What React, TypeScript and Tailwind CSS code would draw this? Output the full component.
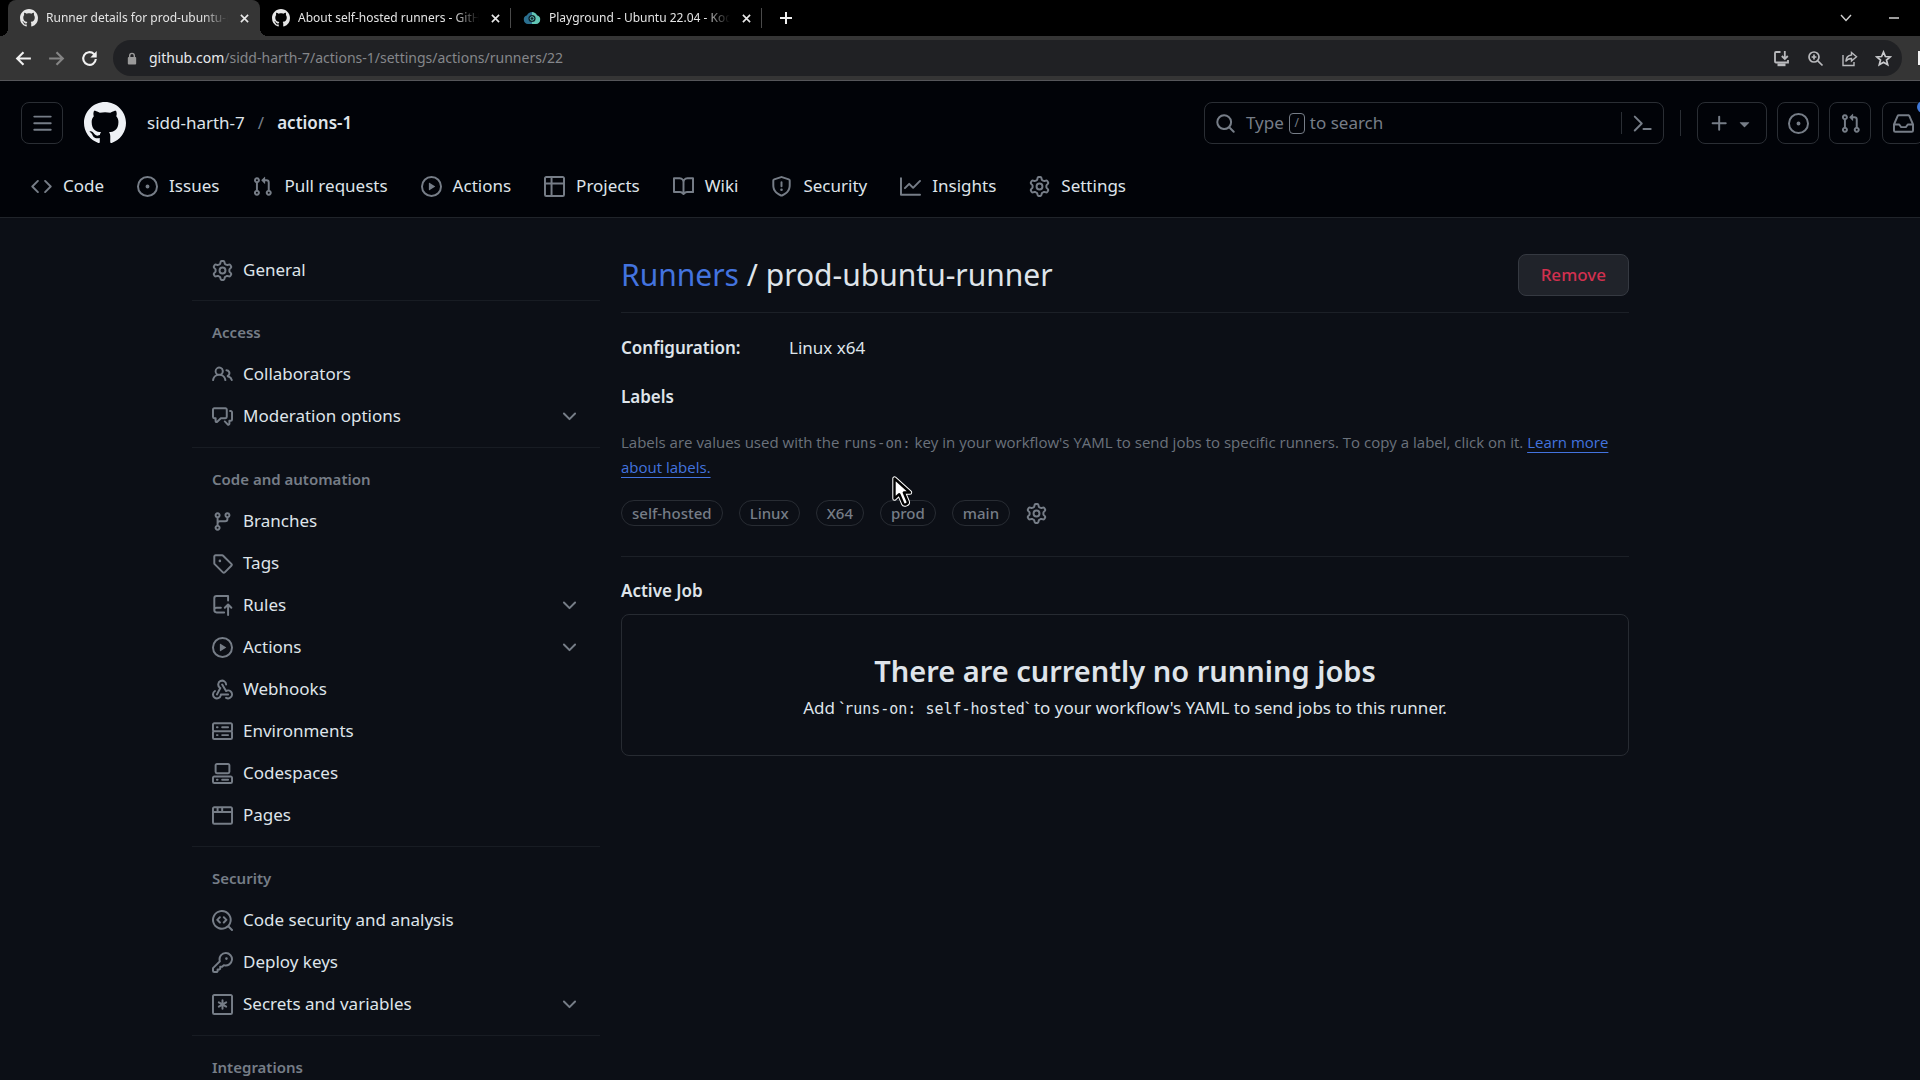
import React from "react";

const icons = {
  code: "m11.28 3.22 4.25 4.25a.75.75 0 0 1 0 1.06l-4.25 4.25a.749.749 0 0 1-1.275-.326.749.749 0 0 1 .215-.734L13.94 8l-3.72-3.72a.749.749 0 0 1 .326-1.275.749.749 0 0 1 .734.215Zm-6.56 0a.751.751 0 0 1 1.042.018.751.751 0 0 1 .018 1.042L2.06 8l3.72 3.72a.749.749 0 0 1-.326 1.275.749.749 0 0 1-.734-.215L.47 8.53a.75.75 0 0 1 0-1.06Z",
  issue: "M8 9.5a1.5 1.5 0 1 0 0-3 1.5 1.5 0 0 0 0 3ZM8 0a8 8 0 1 1 0 16A8 8 0 0 1 8 0ZM1.5 8a6.5 6.5 0 1 0 13 0 6.5 6.5 0 0 0-13 0Z",
  pull: "M1.5 3.25a2.25 2.25 0 1 1 3 2.122v5.256a2.251 2.251 0 1 1-1.5 0V5.372A2.25 2.25 0 0 1 1.5 3.25Zm5.677-.177L9.573.677A.25.25 0 0 1 10 .854V2.5h1A2.5 2.5 0 0 1 13.5 5v5.628a2.251 2.251 0 1 1-1.5 0V5a1 1 0 0 0-1-1h-1v1.646a.25.25 0 0 1-.427.177L7.177 3.427a.25.25 0 0 1 0-.354ZM3.75 2.5a.75.75 0 1 0 0 1.5.75.75 0 0 0 0-1.5Zm0 9.5a.75.75 0 1 0 0 1.5.75.75 0 0 0 0-1.5Zm8.25.75a.75.75 0 1 0 1.5 0 .75.75 0 0 0-1.5 0Z",
  play: "M8 0a8 8 0 1 1 0 16A8 8 0 0 1 8 0ZM1.5 8a6.5 6.5 0 1 0 13 0 6.5 6.5 0 0 0-13 0Zm4.879-2.773 4.264 2.559a.25.25 0 0 1 0 .428l-4.264 2.559A.25.25 0 0 1 6 10.559V5.442a.25.25 0 0 1 .379-.215Z",
  table: "M0 1.75C0 .784.784 0 1.75 0h12.5C15.216 0 16 .784 16 1.75v12.5A1.75 1.75 0 0 1 14.25 16H1.75A1.75 1.75 0 0 1 0 14.25ZM6.5 6.5v8h7.75a.25.25 0 0 0 .25-.25V6.5Zm8-1.5V1.75a.25.25 0 0 0-.25-.25H6.5V5Zm-13 1.5v7.75c0 .138.112.25.25.25H5v-8ZM5 5V1.5H1.75a.25.25 0 0 0-.25.25V5Z",
  book: "M0 1.75A.75.75 0 0 1 .75 1h4.253c1.227 0 2.317.59 3 1.501A3.743 3.743 0 0 1 11.006 1h4.245a.75.75 0 0 1 .75.75v10.5a.75.75 0 0 1-.75.75h-4.507a2.25 2.25 0 0 0-1.591.659l-.622.621a.75.75 0 0 1-1.06 0l-.622-.621A2.25 2.25 0 0 0 5.258 13H.75a.75.75 0 0 1-.75-.75Zm7.251 10.324.004-5.073-.002-2.253A2.25 2.25 0 0 0 5.003 2.5H1.5v9h3.757a3.75 3.75 0 0 1 1.994.574ZM8.755 4.75l-.004 7.322a3.752 3.752 0 0 1 1.992-.572H14.5v-9h-3.495a2.25 2.25 0 0 0-2.25 2.25Z",
  shield: "M7.467.133a1.748 1.748 0 0 1 1.066 0l5.25 1.68A1.75 1.75 0 0 1 15 3.48V7c0 1.566-.32 3.182-1.303 4.682-.983 1.498-2.585 2.813-5.032 3.855a1.697 1.697 0 0 1-1.33 0c-2.447-1.042-4.049-2.357-5.032-3.855C1.32 10.182 1 8.566 1 7V3.48a1.75 1.75 0 0 1 1.217-1.667Zm.61 1.429a.25.25 0 0 0-.153 0l-5.25 1.68a.25.25 0 0 0-.174.238V7c0 1.358.275 2.666 1.057 3.86.784 1.194 2.121 2.34 4.366 3.297a.196.196 0 0 0 .154 0c2.245-.956 3.582-2.104 4.366-3.298C13.225 9.666 13.5 8.36 13.5 7V3.48a.251.251 0 0 0-.174-.237l-5.25-1.68ZM8.75 4.75v3a.75.75 0 0 1-1.5 0v-3a.75.75 0 0 1 1.5 0ZM9 10.5a1 1 0 1 1-2 0 1 1 0 0 1 2 0Z",
  graph: "M1.5 1.75V13.5h13.75a.75.75 0 0 1 0 1.5H.75a.75.75 0 0 1-.75-.75V1.75a.75.75 0 0 1 1.5 0Zm14.28 2.53-5.25 5.25a.75.75 0 0 1-1.06 0L7 7.06 4.28 9.78a.751.751 0 0 1-1.042-.018.751.751 0 0 1-.018-1.042l3.25-3.25a.75.75 0 0 1 1.06 0L10 7.94l4.72-4.72a.751.751 0 0 1 1.042.018.751.751 0 0 1 .018 1.042Z",
  gear: "M8 0a8.2 8.2 0 0 1 .701.031C9.444.095 9.99.645 10.16 1.29l.288 1.107c.018.066.079.158.212.224.231.114.454.243.668.386.123.082.233.09.299.071l1.103-.303c.644-.176 1.392.021 1.82.63.27.385.506.792.704 1.218.315.675.111 1.422-.364 1.891l-.814.806c-.049.048-.098.147-.088.294.016.257.016.515 0 .772-.01.147.038.246.088.294l.814.806c.475.469.679 1.216.364 1.891a7.977 7.977 0 0 1-.704 1.217c-.428.61-1.176.807-1.82.63l-1.102-.302c-.067-.019-.177-.011-.3.071a5.909 5.909 0 0 1-.668.386c-.133.066-.194.158-.211.224l-.29 1.106c-.168.646-.715 1.196-1.458 1.26a8.006 8.006 0 0 1-1.402 0c-.743-.064-1.289-.614-1.458-1.26l-.289-1.106c-.018-.066-.079-.158-.212-.224a5.738 5.738 0 0 1-.668-.386c-.123-.082-.233-.09-.299-.071l-1.103.303c-.644.176-1.392-.021-1.82-.63a8.12 8.12 0 0 1-.704-1.218c-.315-.675-.111-1.422.363-1.891l.815-.806c.05-.048.098-.147.088-.294a6.214 6.214 0 0 1 0-.772c.01-.147-.038-.246-.088-.294l-.815-.806C.635 6.045.431 5.298.746 4.623a7.92 7.92 0 0 1 .704-1.217c.428-.61 1.176-.807 1.82-.63l1.102.302c.067.019.177.011.3-.071.214-.143.437-.272.668-.386.133-.066.194-.158.211-.224l.29-1.106C6.009.645 6.556.095 7.299.03 7.53.01 7.764 0 8 0Zm-.571 1.525c-.036.003-.108.036-.137.146l-.289 1.105c-.147.561-.549.967-.998 1.189-.173.086-.34.183-.5.29-.417.278-.97.423-1.529.27l-1.103-.303c-.109-.03-.175.016-.195.045-.22.312-.412.644-.573.99-.014.031-.021.11.059.19l.815.806c.411.406.562.957.53 1.456a4.709 4.709 0 0 0 0 .582c.032.499-.119 1.05-.53 1.456l-.815.806c-.081.08-.073.159-.059.19.162.346.353.677.573.989.02.03.085.076.195.046l1.102-.303c.56-.153 1.113-.008 1.53.27.161.107.328.204.501.29.447.222.85.629.997 1.189l.289 1.105c.029.109.101.143.137.146a6.6 6.6 0 0 0 1.142 0c.036-.003.108-.036.137-.146l.289-1.105c.147-.561.549-.967.998-1.189.173-.086.34-.183.5-.29.417-.278.97-.423 1.529-.27l1.103.303c.109.029.175-.016.195-.045.22-.313.411-.644.573-.99.014-.031.021-.11-.059-.19l-.815-.806c-.411-.406-.562-.957-.53-1.456a4.709 4.709 0 0 0 0-.582c-.032-.499.119-1.05.53-1.456l.815-.806c.081-.08.073-.159.059-.19a6.464 6.464 0 0 0-.573-.989c-.02-.03-.085-.076-.195-.046l-1.102.303c-.56.153-1.113.008-1.53-.27a4.44 4.44 0 0 0-.501-.29c-.447-.222-.85-.629-.997-1.189l-.289-1.105c-.029-.11-.101-.143-.137-.146a6.6 6.6 0 0 0-1.142 0ZM11 8a3 3 0 1 1-6 0 3 3 0 0 1 6 0ZM9.5 8a1.5 1.5 0 1 0-3.001.001A1.5 1.5 0 0 0 9.5 8Z",
  people: "M2 5.5a3.5 3.5 0 1 1 5.898 2.549 5.508 5.508 0 0 1 3.034 4.084.75.75 0 1 1-1.482.235 4 4 0 0 0-7.9 0 .75.75 0 0 1-1.482-.236A5.507 5.507 0 0 1 3.102 8.05 3.493 3.493 0 0 1 2 5.5ZM11 4a3.001 3.001 0 0 1 2.22 5.018 5.01 5.01 0 0 1 2.56 3.012.749.749 0 0 1-.885.954.752.752 0 0 1-.549-.514 3.507 3.507 0 0 0-2.522-2.372.75.75 0 0 1-.574-.73v-.352a.75.75 0 0 1 .416-.672A1.5 1.5 0 0 0 11 5.5.75.75 0 0 1 11 4Zm-5.5-.5a2 2 0 1 0-.001 3.999A2 2 0 0 0 5.5 3.5Z",
  discussion: "M1.75 1h8.5c.966 0 1.75.784 1.75 1.75v5.5A1.75 1.75 0 0 1 10.25 10H7.061l-2.574 2.573A1.458 1.458 0 0 1 2 11.543V10h-.25A1.75 1.75 0 0 1 0 8.25v-5.5C0 1.784.784 1 1.75 1ZM1.5 2.75v5.5c0 .138.112.25.25.25h1a.75.75 0 0 1 .75.75v2.19l2.72-2.72a.749.749 0 0 1 .53-.22h3.5a.25.25 0 0 0 .25-.25v-5.5a.25.25 0 0 0-.25-.25h-8.5a.25.25 0 0 0-.25.25Zm13 2a.25.25 0 0 0-.25-.25h-.5a.75.75 0 0 1 0-1.5h.5c.966 0 1.75.784 1.75 1.75v5.5A1.75 1.75 0 0 1 14.25 12H14v1.543a1.458 1.458 0 0 1-2.487 1.03L9.22 12.28a.749.749 0 0 1 .326-1.275.749.749 0 0 1 .734.215l2.22 2.22v-2.19a.75.75 0 0 1 .75-.75h1a.25.25 0 0 0 .25-.25Z",
  branch: "M9.5 3.25a2.25 2.25 0 1 1 3 2.122V6A2.5 2.5 0 0 1 10 8.5H6a1 1 0 0 0-1 1v1.128a2.251 2.251 0 1 1-1.5 0V5.372a2.25 2.25 0 1 1 1.5 0v1.836A2.493 2.493 0 0 1 6 7h4a1 1 0 0 0 1-1v-.628A2.25 2.25 0 0 1 9.5 3.25Zm-6 0a.75.75 0 1 0 1.5 0 .75.75 0 0 0-1.5 0Zm8.25-.75a.75.75 0 1 0 0 1.5.75.75 0 0 0 0-1.5ZM4.25 12a.75.75 0 1 0 0 1.5.75.75 0 0 0 0-1.5Z",
  tag: "M1 7.775V2.75C1 1.784 1.784 1 2.75 1h5.025c.464 0 .91.184 1.238.513l6.25 6.25a1.75 1.75 0 0 1 0 2.474l-5.026 5.026a1.75 1.75 0 0 1-2.474 0l-6.25-6.25A1.752 1.752 0 0 1 1 7.775Zm1.5 0c0 .066.026.13.073.177l6.25 6.25a.25.25 0 0 0 .354 0l5.025-5.025a.25.25 0 0 0 0-.354l-6.25-6.25a.25.25 0 0 0-.177-.073H2.75a.25.25 0 0 0-.25.25ZM6 5a1 1 0 1 1 0 2 1 1 0 0 1 0-2Z",
  repoPush: "M1 2.5A2.5 2.5 0 0 1 3.5 0h8.75a.75.75 0 0 1 .75.75v3.5a.75.75 0 0 1-1.5 0V1.5h-8a1 1 0 0 0-1 1v6.708A2.493 2.493 0 0 1 3.5 9h3.25a.75.75 0 0 1 0 1.5H3.5a1 1 0 0 0 0 2h5.75a.75.75 0 0 1 0 1.5H3.5A2.5 2.5 0 0 1 1 11.5Zm13.23 7.79h-.001l-1.224-1.224v6.184a.75.75 0 0 1-1.5 0V9.066L10.28 10.29a.75.75 0 0 1-1.06-1.061l2.505-2.504a.75.75 0 0 1 1.06 0L15.29 9.23a.751.751 0 0 1-.018 1.042.751.751 0 0 1-1.042.018Z",
  webhook: "M5.5 4.25a2.25 2.25 0 0 1 4.5 0 .75.75 0 0 0 1.5 0 3.75 3.75 0 1 0-6.14 2.889l-2.272 4.258a.75.75 0 0 0 1.324.706L7 7.25a.75.75 0 0 0-.309-1.015A2.25 2.25 0 0 1 5.5 4.25Z",
  webhookRight: "M7.364 3.607a.75.75 0 0 1 1.03.257l2.608 4.349a3.75 3.75 0 1 1-.628 6.785.75.75 0 0 1 .752-1.299 2.25 2.25 0 1 0-.033-3.88.75.75 0 0 1-1.03-.256L7.107 4.636a.75.75 0 0 1 .257-1.03Z",
  webhookLeft: "M2.9 8.776A.75.75 0 0 1 2.625 9.8 2.25 2.25 0 1 0 6 11.75a.75.75 0 0 1 .75-.751h5.5a.75.75 0 0 1 0 1.5H7.425a3.751 3.751 0 1 1-5.55-3.998.75.75 0 0 1 1.024.274Z",
  server: "M1.75 1h12.5c.966 0 1.75.784 1.75 1.75v4c0 .372-.116.717-.314 1 .198.283.314.628.314 1v4a1.75 1.75 0 0 1-1.75 1.75H1.75A1.75 1.75 0 0 1 0 12.75v-4c0-.358.109-.707.314-1a1.739 1.739 0 0 1-.314-1v-4C0 1.784.784 1 1.75 1ZM1.5 2.75v4c0 .138.112.25.25.25h12.5a.25.25 0 0 0 .25-.25v-4a.25.25 0 0 0-.25-.25H1.75a.25.25 0 0 0-.25.25Zm.25 5.75a.25.25 0 0 0-.25.25v4c0 .138.112.25.25.25h12.5a.25.25 0 0 0 .25-.25v-4a.25.25 0 0 0-.25-.25ZM7 4.75A.75.75 0 0 1 7.75 4h4.5a.75.75 0 0 1 0 1.5h-4.5A.75.75 0 0 1 7 4.75ZM7.75 10h4.5a.75.75 0 0 1 0 1.5h-4.5a.75.75 0 0 1 0-1.5ZM3 4.75A.75.75 0 0 1 3.75 4h.5a.75.75 0 0 1 0 1.5h-.5A.75.75 0 0 1 3 4.75ZM3.75 10h.5a.75.75 0 0 1 0 1.5h-.5a.75.75 0 0 1 0-1.5Z",
  codespaces: "M0 11.25c0-.966.784-1.75 1.75-1.75h12.5c.966 0 1.75.784 1.75 1.75v3A1.75 1.75 0 0 1 14.25 16H1.75A1.75 1.75 0 0 1 0 14.25Zm2-9.5C2 .784 2.784 0 3.75 0h8.5C13.216 0 14 .784 14 1.75v5a1.75 1.75 0 0 1-1.75 1.75h-8.5A1.75 1.75 0 0 1 2 6.75Zm1.75-.25a.25.25 0 0 0-.25.25v5c0 .138.112.25.25.25h8.5a.25.25 0 0 0 .25-.25v-5a.25.25 0 0 0-.25-.25Zm-2 9.5a.25.25 0 0 0-.25.25v3c0 .138.112.25.25.25h12.5a.25.25 0 0 0 .25-.25v-3a.25.25 0 0 0-.25-.25ZM7 12.75a.75.75 0 0 1 .75-.75h4.5a.75.75 0 0 1 0 1.5h-4.5a.75.75 0 0 1-.75-.75Zm-4 0a.75.75 0 0 1 .75-.75h.5a.75.75 0 0 1 0 1.5h-.5a.75.75 0 0 1-.75-.75Z",
  browser: "M0 2.75C0 1.784.784 1 1.75 1h12.5c.966 0 1.75.784 1.75 1.75v10.5A1.75 1.75 0 0 1 14.25 15H1.75A1.75 1.75 0 0 1 0 13.25ZM14.5 6h-13v7.25c0 .138.112.25.25.25h12.5a.25.25 0 0 0 .25-.25Zm-6-3.5v2h6V2.75a.25.25 0 0 0-.25-.25ZM5 2.5v2h2v-2Zm-3.25 0a.25.25 0 0 0-.25.25V4.5h2v-2Z",
  codescan: "M8.47 4.97a.75.75 0 0 0 0 1.06L9.94 7.5 8.47 8.97a.75.75 0 1 0 1.06 1.06l2-2a.75.75 0 0 0 0-1.06l-2-2a.75.75 0 0 0-1.06 0ZM6.53 6.03a.75.75 0 0 0-1.06-1.06l-2 2a.75.75 0 0 0 0 1.06l2 2a.75.75 0 1 0 1.06-1.06L5.06 7.5l1.47-1.47ZM12.246 13.307a7.501 7.501 0 1 1 1.06-1.06l2.474 2.473a.749.749 0 0 1-.326 1.275.749.749 0 0 1-.734-.215ZM1.5 7.5a6.002 6.002 0 0 0 3.608 5.504 6.002 6.002 0 0 0 6.486-1.117.748.748 0 0 1 .292-.293A6 6 0 1 0 1.5 7.5Z",
  key: "M10.5 0a5.499 5.499 0 1 1-1.288 10.848l-.932.932a.749.749 0 0 1-.53.22H7v.75a.749.749 0 0 1-.22.53l-.5.5a.749.749 0 0 1-.53.22H5v.75a.749.749 0 0 1-.22.53l-.5.5a.749.749 0 0 1-.53.22h-2A1.75 1.75 0 0 1 0 14.25v-2c0-.199.079-.389.22-.53l4.932-4.932A5.5 5.5 0 0 1 10.5 0Zm-4 5.5c-.001.431.069.86.205 1.269a.75.75 0 0 1-.181.768L1.5 12.56v1.69c0 .138.112.25.25.25h1.69l.06-.06v-1.19a.75.75 0 0 1 .75-.75h1.19l.06-.06v-1.19a.75.75 0 0 1 .75-.75h1.19l1.023-1.025a.75.75 0 0 1 .768-.18A4 4 0 1 0 6.5 5.5ZM11 6a1 1 0 1 1 0-2 1 1 0 0 1 0 2Z",
  bars: "M1 2.75A.75.75 0 0 1 1.75 2h12.5a.75.75 0 0 1 0 1.5H1.75A.75.75 0 0 1 1 2.75Zm0 5A.75.75 0 0 1 1.75 7h12.5a.75.75 0 0 1 0 1.5H1.75A.75.75 0 0 1 1 7.75ZM1.75 12h12.5a.75.75 0 0 1 0 1.5H1.75a.75.75 0 0 1 0-1.5Z",
  github: "M8 0c4.42 0 8 3.58 8 8a8.013 8.013 0 0 1-5.45 7.59c-.4.08-.55-.17-.55-.38 0-.27.01-1.13.01-2.2 0-.75-.25-1.23-.54-1.48 1.78-.2 3.65-.88 3.65-3.95 0-.88-.31-1.59-.82-2.15.08-.2.36-1.02-.08-2.12 0 0-.67-.22-2.2.82-.64-.18-1.32-.27-2-.27-.68 0-1.36.09-2 .27-1.53-1.03-2.2-.82-2.2-.82-.44 1.1-.16 1.92-.08 2.12-.51.56-.82 1.28-.82 2.15 0 3.06 1.86 3.75 3.64 3.95-.23.2-.44.55-.51 1.07-.46.21-1.61.55-2.33-.66-.15-.24-.6-.83-1.23-.82-.67.01-.27.38.01.53.34.19.73.9.82 1.13.16.45.68 1.31 2.69.94 0 .67.01 1.3.01 1.49 0 .21-.15.45-.55.38A7.995 7.995 0 0 1 0 8c0-4.42 3.58-8 8-8Z",
  search: "M10.68 11.74a6 6 0 0 1-7.922-8.982 6 6 0 0 1 8.982 7.922l3.04 3.04a.749.749 0 0 1-.326 1.275.749.749 0 0 1-.734-.215ZM11.5 7a4.499 4.499 0 1 0-8.997 0A4.499 4.499 0 0 0 11.5 7Z",
  plus: "M7.75 2a.75.75 0 0 1 .75.75V7h4.25a.75.75 0 0 1 0 1.5H8.5v4.25a.75.75 0 0 1-1.5 0V8.5H2.75a.75.75 0 0 1 0-1.5H7V2.75A.75.75 0 0 1 7.75 2Z",
  triangle: "m4.427 7.427 3.396 3.396a.25.25 0 0 0 .354 0l3.396-3.396A.25.25 0 0 0 11.396 7H4.604a.25.25 0 0 0-.177.427Z",
  inbox: "M2.8 2.06A1.75 1.75 0 0 1 4.41 1h7.18c.7 0 1.333.417 1.61 1.06l2.74 6.395c.04.093.06.194.06.295v4.5A1.75 1.75 0 0 1 14.25 15H1.75A1.75 1.75 0 0 1 0 13.25v-4.5c0-.101.02-.202.06-.295Zm1.61.44a.25.25 0 0 0-.23.152L1.887 8H4.75a.75.75 0 0 1 .6.3L6.625 10h2.75l1.275-1.7a.75.75 0 0 1 .6-.3h2.863L11.82 2.652a.25.25 0 0 0-.23-.152Zm10.09 7h-2.875l-1.275 1.7a.75.75 0 0 1-.6.3h-3.5a.75.75 0 0 1-.6-.3L4.375 9.5H1.5v3.75c0 .138.112.25.25.25h12.5a.25.25 0 0 0 .25-.25Z",
  palette: "m6.354 8.04-4.773 4.773a.75.75 0 1 0 1.061 1.06L7.945 8.57a.75.75 0 0 0 0-1.06L2.642 2.206a.75.75 0 0 0-1.06 1.061L6.353 8.04ZM8.75 11.5a.75.75 0 0 0 0 1.5h5.5a.75.75 0 0 0 0-1.5h-5.5Z",
  chevron: "M12.78 5.22a.749.749 0 0 1 0 1.06l-4.25 4.25a.749.749 0 0 1-1.06 0L3.22 6.28a.749.749 0 1 1 1.06-1.06L8 8.939l3.72-3.719a.749.749 0 0 1 1.06 0Z",
  asterisk: "M1.75 0h12.5C15.216 0 16 .784 16 1.75v12.5A1.75 1.75 0 0 1 14.25 16H1.75A1.75 1.75 0 0 1 0 14.25V1.75C0 .784.784 0 1.75 0ZM1.5 1.75v12.5c0 .138.112.25.25.25h12.5a.25.25 0 0 0 .25-.25V1.75a.25.25 0 0 0-.25-.25H1.75a.25.25 0 0 0-.25.25ZM8 4a.75.75 0 0 1 .75.75V6.7l1.69-.975a.75.75 0 0 1 .75 1.3L9.5 8l1.69.976a.75.75 0 0 1-.75 1.298L8.75 9.3v1.951a.75.75 0 0 1-1.5 0V9.299l-1.69.976a.75.75 0 0 1-.75-1.3L6.5 8l-1.69-.975a.75.75 0 0 1 .75-1.3l1.69.976V4.75A.75.75 0 0 1 8 4Z",
};

type IconName = keyof typeof icons;

function Icon({ name, className = "size-[21px] text-[#767d87]" }: { name: IconName; className?: string }) {
  return (
    <svg viewBox="0 0 16 16" fill="currentColor" aria-hidden="true" className={`shrink-0 ${className}`}>
      <path d={icons[name]} />
      {name === "webhook" && (
        <>
          <path d={icons.webhookRight} />
          <path d={icons.webhookLeft} />
        </>
      )}
    </svg>
  );
}

function CloudFavicon() {
  return (
    <svg viewBox="0 0 18 14" className="h-3.5 w-[18px] shrink-0" aria-hidden="true">
      <path d="M5 13a4.5 4.5 0 0 1-1-8.8A6 6 0 0 1 9 1v12Z" fill="#2b6f8f" />
      <path d="M9 1a6 6 0 0 1 5 3.2A4.5 4.5 0 0 1 13 13H9Z" fill="#62c6b5" />
      <circle cx="9" cy="7.5" r="3.6" fill="#10242c" />
      <circle cx="9" cy="7.5" r="1.8" fill="none" stroke="#58b8ae" strokeWidth="1" />
    </svg>
  );
}

function CloseIcon() {
  return (
    <svg viewBox="0 0 10 10" className="size-[9px]" aria-hidden="true">
      <path d="M1 1l8 8M9 1l-8 8" stroke="#e8e8e8" strokeWidth="1.8" />
    </svg>
  );
}

function Tab({ title, icon, active = false }: { title: string; icon: React.ReactNode; active?: boolean }) {
  return (
    <div
      className={
        active
          ? "relative flex w-[252px] items-center rounded-t-lg bg-[#353535] pr-2 pl-3 before:absolute before:bottom-0 before:-left-2 before:size-2 before:bg-[radial-gradient(circle_at_0_0,transparent_8px,#353535_8px)] after:absolute after:-right-2 after:bottom-0 after:size-2 after:bg-[radial-gradient(circle_at_100%_0,transparent_8px,#353535_8px)]"
          : "relative flex w-[251px] items-center pr-2 pl-3 after:absolute after:right-0 after:h-5 after:w-px after:bg-[#4a4a4a]"
      }
    >
      {icon}
      <a
        href="#"
        className="mr-2 ml-2 min-w-0 flex-1 overflow-hidden text-xs whitespace-nowrap text-[#e4e4e4] [mask-image:linear-gradient(to_right,black_86%,transparent)]"
      >
        {title}
      </a>
      <button aria-label="Close tab" className="flex size-4 items-center justify-center">
        <CloseIcon />
      </button>
    </div>
  );
}

function BrowserChrome() {
  return (
    <div className="shrink-0">
      <div className="flex h-9 bg-black pl-2">
        <Tab active title="Runner details for prod-ubuntu-runner" icon={<Icon name="github" className="size-[18px] text-[#e6e6e6]" />} />
        <Tab title="About self-hosted runners - GitHub Docs" icon={<Icon name="github" className="size-[18px] text-[#e6e6e6]" />} />
        <Tab title="Playground - Ubuntu 22.04 - KodeKloud" icon={<CloudFavicon />} />
        <button aria-label="New tab" className="flex w-12 items-center justify-center">
          <svg viewBox="0 0 14 14" className="size-3.5" aria-hidden="true">
            <path d="M7 1v12M1 7h12" stroke="#f0f0f0" strokeWidth="2" />
          </svg>
        </button>
        <div className="ml-auto flex items-center gap-9 pr-5">
          <button aria-label="Search tabs">
            <svg viewBox="0 0 12 8" className="h-2 w-3" fill="none" aria-hidden="true">
              <path d="M1 1l5 5.5 5-5.5" stroke="#d0d0d0" strokeWidth="1.4" />
            </svg>
          </button>
          <button aria-label="Minimize">
            <svg viewBox="0 0 12 8" className="h-2 w-3" aria-hidden="true">
              <path d="M1 4h10" stroke="#e0e0e0" strokeWidth="1.4" />
            </svg>
          </button>
        </div>
      </div>
      <div className="flex h-[45px] items-center border-b border-[#55565a] bg-[#353535] pl-3.5">
        <button aria-label="Back">
          <svg viewBox="0 0 18 18" className="size-[19px]" fill="none" stroke="#f1f1f1" strokeWidth="2" aria-hidden="true">
            <path d="M16 9H3M9 3L3 9l6 6" />
          </svg>
        </button>
        <button aria-label="Forward" className="ml-3.5">
          <svg viewBox="0 0 18 18" className="size-[19px]" fill="none" stroke="#858585" strokeWidth="2" aria-hidden="true">
            <path d="M2 9h13M9 3l6 6-6 6" />
          </svg>
        </button>
        <button aria-label="Reload" className="ml-3.5">
          <svg viewBox="0 0 18 18" className="size-[19px]" fill="none" aria-hidden="true">
            <path d="M15 9.5a6 6 0 1 1-1.8-4.8L15 6.5" stroke="#f1f1f1" strokeWidth="2" />
            <path d="M15.8 2v6H9.8Z" fill="#f1f1f1" />
          </svg>
        </button>
        <div className="ml-3.5 flex h-9 flex-1 items-center rounded-full bg-[#202124] pr-2.5">
          <svg viewBox="0 0 10 14" className="ml-3.5 h-[13px] w-2.5" aria-hidden="true">
            <path d="M2.5 6V4a2.5 2.5 0 0 1 5 0v2" fill="none" stroke="#9a9a9a" strokeWidth="1.5" />
            <rect x="0.5" y="5.5" width="9" height="8" rx="1" fill="#9a9a9a" />
          </svg>
          <p className="ml-3 flex-1 text-sm text-[#85878b]">
            <span className="text-[#e8eaed]">github.com</span>/sidd-harth-7/actions-1/settings/actions/runners/22
          </p>
          <div className="flex items-center gap-[17px]">
            <button aria-label="Install app">
              <svg viewBox="0 0 17 17" className="size-[17px]" fill="none" stroke="#b9babd" strokeWidth="1.8" aria-hidden="true">
                <path d="M7.5 2H3a1 1 0 0 0-1 1v8.5a1 1 0 0 0 1 1h12V10M11.8 1v7.5M8.8 6l3 3 3-3" />
                <path d="M4.5 14.8h8" strokeWidth="2.8" />
              </svg>
            </button>
            <button aria-label="Zoom">
              <svg viewBox="0 0 17 17" className="size-[17px]" fill="none" stroke="#b9babd" strokeWidth="1.7" aria-hidden="true">
                <circle cx="7" cy="7" r="5" />
                <path d="M10.8 10.8L15.5 15.5M7 4.6v4.8M4.6 7h4.8" />
              </svg>
            </button>
            <button aria-label="Share">
              <svg viewBox="0 0 17 17" className="size-[17px]" fill="none" stroke="#b9babd" strokeWidth="1.4" aria-hidden="true">
                <path d="M2 5v10.5h11V12" />
                <path d="M10.5 2.5l5 4.3-5 4.2V8.5C7.5 8.5 6 9.5 4.8 11.5 5 8 7 5.3 10.5 5Z" />
              </svg>
            </button>
            <button aria-label="Bookmark">
              <svg viewBox="0 0 17 17" className="size-[17px]" fill="none" stroke="#c9cacd" strokeWidth="1.7" aria-hidden="true">
                <path d="M8.5 2l1.9 4.5 4.8.4-3.7 3.1 1.2 4.8-4.2-2.6-4.2 2.6 1.2-4.8L1.8 6.9l4.8-.4Z" />
              </svg>
            </button>
          </div>
        </div>
        <div className="ml-4 h-3.5 w-0.5 bg-[#f2f2f2]" />
      </div>
    </div>
  );
}

const navItems: [IconName, string][] = [
  ["code", "Code"],
  ["issue", "Issues"],
  ["pull", "Pull requests"],
  ["play", "Actions"],
  ["table", "Projects"],
  ["book", "Wiki"],
  ["shield", "Security"],
  ["graph", "Insights"],
  ["gear", "Settings"],
];

const squareButton =
  "relative flex h-[42px] shrink-0 items-center justify-center rounded-lg border border-[#2a2e34]";

function SiteHeader() {
  return (
    <header className="shrink-0 overflow-hidden border-b border-[#20242a] bg-[#010308]">
      <div className="flex items-center pt-[21px] pl-[21px]">
        <button aria-label="Open menu" className={`${squareButton} w-[42px]`}>
          <Icon name="bars" />
        </button>
        <a href="#" aria-label="Homepage" className="ml-[21px]">
          <Icon name="github" className="size-[42px] text-[#eef1f5]" />
        </a>
        <div className="ml-[21px] flex gap-[13px]">
          <a href="#">sidd-harth-7</a>
          <span className="text-[#767d87]">/</span>
          <a href="#" className="font-semibold">actions-1</a>
        </div>
        <div className="-mr-1 ml-auto flex items-center">
          <div className="flex h-[42px] w-[460px] items-center rounded-lg border border-[#2a2e34] pl-2.5 text-[#767d87]">
            <Icon name="search" />
            <label htmlFor="site-search" className="ml-2.5 flex items-center gap-[5px] whitespace-nowrap">
              Type
              <kbd className="flex h-[21px] w-4 items-center justify-center rounded border border-[#767d87] font-['Noto_Sans',sans-serif] text-xs">
                /
              </kbd>
              to search
            </label>
            <input id="site-search" type="text" className="min-w-0 flex-1 bg-transparent outline-none" />
            <button aria-label="Command palette" className="flex h-[22px] items-center border-l border-[#2a2e34] px-2.5">
              <Icon name="palette" />
            </button>
          </div>
          <div className="mx-4 h-[26px] w-px bg-[#2a2e34]" />
          <button aria-label="Create new" className={`${squareButton} w-[70px] gap-1`}>
            <Icon name="plus" />
            <Icon name="triangle" />
          </button>
          <button aria-label="Issues" className={`${squareButton} ml-2.5 w-[42px]`}>
            <Icon name="issue" />
          </button>
          <button aria-label="Pull requests" className={`${squareButton} ml-2.5 w-[42px]`}>
            <Icon name="pull" />
          </button>
          <button aria-label="Notifications" className={`${squareButton} ml-[11px] w-[42px]`}>
            <Icon name="inbox" />
            <span className="absolute -top-0.5 -right-1.5 size-3 rounded-full bg-[#3f78d8]" />
          </button>
        </div>
      </div>
      <nav aria-label="Repository" className="flex h-[73px] gap-[33px] pt-[11px] pl-[31px]">
        {navItems.map(([icon, label]) => (
          <a key={label} href="#" className="flex h-[62px] items-center gap-[11px]">
            <Icon name={icon} />
            {label}
          </a>
        ))}
      </nav>
    </header>
  );
}

type Entry = { icon: IconName; label: string; expandable?: boolean };

const sections: { heading?: string; entries: Entry[] }[] = [
  { entries: [{ icon: "gear", label: "General" }] },
  {
    heading: "Access",
    entries: [
      { icon: "people", label: "Collaborators" },
      { icon: "discussion", label: "Moderation options", expandable: true },
    ],
  },
  {
    heading: "Code and automation",
    entries: [
      { icon: "branch", label: "Branches" },
      { icon: "tag", label: "Tags" },
      { icon: "repoPush", label: "Rules", expandable: true },
      { icon: "play", label: "Actions", expandable: true },
      { icon: "webhook", label: "Webhooks" },
      { icon: "server", label: "Environments" },
      { icon: "codespaces", label: "Codespaces" },
      { icon: "browser", label: "Pages" },
    ],
  },
  {
    heading: "Security",
    entries: [
      { icon: "codescan", label: "Code security and analysis" },
      { icon: "key", label: "Deploy keys" },
      { icon: "asterisk", label: "Secrets and variables", expandable: true },
    ],
  },
  { heading: "Integrations", entries: [] },
];

function SidebarEntry({ icon, label, expandable }: Entry) {
  const row = "flex h-[42px] w-full items-center gap-2.5 px-5 text-left";
  if (expandable) {
    return (
      <button className={row} aria-expanded="false">
        <Icon name={icon} />
        <span className="flex-1">{label}</span>
        <Icon name="chevron" />
      </button>
    );
  }
  return (
    <a href="#" className={row}>
      <Icon name={icon} />
      {label}
    </a>
  );
}

function Sidebar() {
  return (
    <nav aria-label="Settings" className="pt-[31px]">
      {sections.map(({ heading, entries }, i) => (
        <section key={heading ?? i} className={i > 0 ? "border-t border-[#181c23] py-2.5" : "pb-[9px]"}>
          {heading && (
            <h2 className="flex h-[42px] items-center px-5 text-[15px] font-semibold text-[#767d87]">{heading}</h2>
          )}
          {entries.map((entry) => (
            <SidebarEntry key={entry.label} {...entry} />
          ))}
        </section>
      ))}
    </nav>
  );
}

const labels = ["self-hosted", "Linux", "X64", "prod", "main"];

function RunnerDetails() {
  return (
    <main className="pt-9">
      <div className="flex items-center justify-between border-b border-[#1c2027] pb-4">
        <h1 className="text-3xl">
          <a href="#" className="text-[#4373df]">Runners</a> / prod-ubuntu-runner
        </h1>
        <button className="h-[42px] rounded-lg border border-[#353941] bg-[#20232a] px-[22px] font-medium text-[#d2304f]">
          Remove
        </button>
      </div>
      <dl className="mt-[23px] flex">
        <dt className="w-[168px] font-semibold">Configuration:</dt>
        <dd>Linux x64</dd>
      </dl>
      <h2 className="mt-[25px] font-semibold">Labels</h2>
      <p className="mt-[21px] font-['Open_Sans',sans-serif] text-[15px] leading-[25px] text-[#6b727c]">
        Labels are values used with the <code className="font-['DejaVu_Sans_Mono',monospace] text-sm">runs-on:</code> key
        in your workflow's YAML to send jobs to specific runners. To copy a label, click on it.{" "}
        <a href="#" className="text-[#4373df] underline underline-offset-4">
          Learn more about labels.
        </a>
      </p>
      <div className="mt-5 flex h-[26px] items-center gap-4">
        {labels.map((label) => (
          <button
            key={label}
            className="h-[26px] rounded-full border border-[#282c33] px-2.5 text-[15px] leading-6 font-medium text-[#767d87]"
          >
            {label}
          </button>
        ))}
        <button aria-label="Edit labels">
          <Icon name="gear" />
        </button>
      </div>
      <hr className="mt-[30px] border-[#1c2027]" />
      <h2 className="mt-[22px] font-semibold">Active Job</h2>
      <section className="mt-[11px] rounded-lg border border-[#272b32] pt-[38px] pb-[34px] text-center">
        <h3 className="text-[29px] leading-9 font-semibold">There are currently no running jobs</h3>
        <p className="mt-[7px]">
          Add `<code className="font-['DejaVu_Sans_Mono',monospace] text-[15px]">runs-on: self-hosted</code>` to your
          workflow's YAML to send jobs to this runner.
        </p>
      </section>
    </main>
  );
}

function Pointer() {
  return (
    <svg viewBox="0 0 21 33" className="pointer-events-none absolute top-[475px] left-[892px] h-[33px] w-[21px]" aria-hidden="true">
      <g fill="#fff" strokeLinejoin="round">
        <path
          d="M2.5 3.5v20l4.8-4.3 3.9 9.3c1 2.2 5.3.5 4.5-1.8l-3.9-9.2h6.2Z"
          stroke="#fff"
          strokeWidth="4.4"
        />
        <path
          d="M2.5 3.5v20l4.8-4.3 3.9 9.3c1 2.2 5.3.5 4.5-1.8l-3.9-9.2h6.2Z"
          stroke="#000"
          strokeWidth="2.4"
        />
      </g>
    </svg>
  );
}

export default function App() {
  return (
    <div className="relative flex h-screen flex-col overflow-hidden bg-[#0c0f16] font-['Noto_Sans',sans-serif] text-[17px] leading-6 text-[#dfe4ea]">
      <BrowserChrome />
      <SiteHeader />
      <div className="grid min-h-0 flex-1 grid-cols-[408px_minmax(0,1fr)] gap-[21px] overflow-hidden pr-[291px] pl-48">
        <Sidebar />
        <RunnerDetails />
      </div>
      <Pointer />
    </div>
  );
}
